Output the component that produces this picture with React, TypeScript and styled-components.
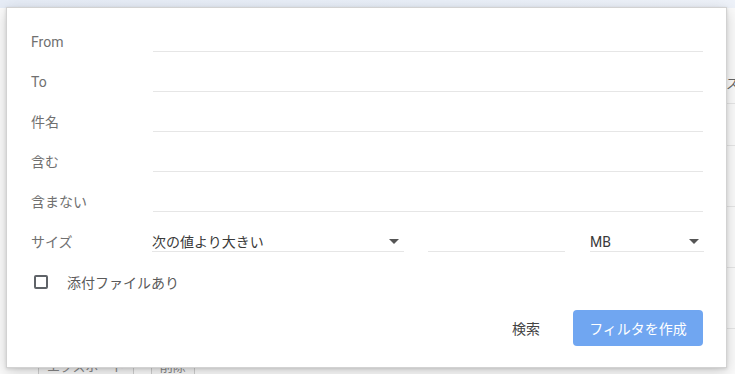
import React from "react";
import styled, { createGlobalStyle } from "styled-components";

const Global = createGlobalStyle`
  html, body { margin: 0; padding: 0; background: #ffffff; }
  body { font-family: Roboto, "Noto Sans CJK JP", "Noto Sans", sans-serif; }
  * { box-sizing: border-box; }
`;

const Page = styled.div`
  position: relative;
  width: 735px;
  height: 374px;
  overflow: hidden;
  background: #ffffff;
  display: flex;
  flex-direction: column;
`;

const TopBand = styled.div`
  height: 8px;
  flex: none;
  background: linear-gradient(90deg, #e6ecf6 0%, #e9eff8 60%, #eef2f9 100%);
`;

const BackBody = styled.div`
  flex: 1;
  display: flex;
  flex-direction: column;
  padding-left: 38px;
  background: #fbfbfb;
`;

const Spacer = styled.div`
  height: 54px;
  flex: none;
`;

const TableRow = styled.div<{ $h: number }>`
  height: ${(p) => p.$h}px;
  flex: none;
  display: grid;
  grid-template-columns: 688px 1fr;
  align-items: center;
  border-bottom: 1px solid #e6e6e6;
  font-size: 13px;
  color: #666;
  white-space: nowrap;
`;

const Cell = styled.span`
  overflow: hidden;
`;

const BackActions = styled.div`
  display: flex;
  gap: 17px;
  margin-top: 25px;
`;

const BackButton = styled.div`
  height: 26px;
  padding: 0 8px;
  border: 1px solid #cfcfcf;
  border-radius: 2px;
  font-size: 13px;
  line-height: 24px;
  color: #888;
  background: #f7f7f7;
  white-space: nowrap;
`;

const Dialog = styled.div`
  position: absolute;
  top: 7px;
  left: 6px;
  width: 721px;
  height: 361px;
  background: #ffffff;
  border: 1px solid #d2d2d2;
  box-shadow: 0 4px 14px rgba(0, 0, 0, 0.18), 0 1px 3px rgba(0, 0, 0, 0.12);
  padding: 4px 23px 0 24px;
  display: flex;
  flex-direction: column;
`;

const Row = styled.div`
  height: 40px;
  display: grid;
  grid-template-columns: 121px 1fr;
  align-items: end;
`;

const Label = styled.div`
  height: 20px;
  line-height: 20px;
  font-size: 14px;
  color: #707070;
  white-space: nowrap;
`;

const Field = styled.div`
  height: 20px;
  margin-left: 1px;
  border-bottom: 1px solid #e6e6e6;
`;

const SizeControls = styled.div`
  display: flex;
  align-items: end;
`;

const Select = styled.div<{ $w: number; $ml?: number }>`
  width: ${(p) => p.$w}px;
  margin-left: ${(p) => p.$ml ?? 0}px;
  height: 20px;
  flex: none;
  display: flex;
  align-items: center;
  justify-content: space-between;
  padding-right: 5px;
  border-bottom: 1px solid #e6e6e6;
  font-size: 14px;
  color: #3a3a3a;
  line-height: 20px;
`;

const SizeInput = styled.div<{ $w: number; $ml: number }>`
  width: ${(p) => p.$w}px;
  margin-left: ${(p) => p.$ml}px;
  height: 20px;
  flex: none;
  border-bottom: 1px solid #e6e6e6;
`;

const Arrow = () => (
  <svg width="10" height="5" viewBox="0 0 10 5" aria-hidden="true">
    <path d="M0 0 L10 0 L5 5 Z" fill="#555" />
  </svg>
);

const CheckRow = styled.label`
  margin-top: 10px;
  height: 40px;
  display: flex;
  align-items: center;
  gap: 19px;
  padding-left: 3px;
  font-size: 14px;
  color: #5a5a5a;
`;

const CheckBox = styled.span`
  width: 14px;
  height: 14px;
  border: 2px solid #5f6368;
  border-radius: 2px;
  flex: none;
`;

const Footer = styled.div`
  margin-top: 8px;
  display: flex;
  justify-content: flex-end;
  align-items: center;
  gap: 17px;
`;

const TextButton = styled.button`
  height: 36px;
  padding: 0 16px;
  border: none;
  background: transparent;
  font-family: inherit;
  font-size: 14px;
  color: #444;
`;

const PrimaryButton = styled.button`
  height: 36px;
  width: 130px;
  padding: 0 16px;
  border: none;
  border-radius: 4px;
  background: #70a6f1;
  color: #ffffff;
  font-family: inherit;
  font-size: 14px;
`;

const textRows = [
  { label: "From" },
  { label: "To" },
  { label: "件名" },
  { label: "含む" },
  { label: "含まない" },
];

export default function App() {
  return (
    <>
      <Global />
      <Page>
        <TopBand />
        <BackBody>
          <Spacer />
          <TableRow $h={42}>
            <Cell />
            <Cell>スター付き</Cell>
          </TableRow>
          <TableRow $h={42}>
            <Cell />
            <Cell />
          </TableRow>
          <TableRow $h={61}>
            <Cell />
            <Cell />
          </TableRow>
          <TableRow $h={61}>
            <Cell />
            <Cell />
          </TableRow>
          <TableRow $h={61}>
            <Cell />
            <Cell />
          </TableRow>
          <BackActions>
            <BackButton>エクスポート</BackButton>
            <BackButton>削除</BackButton>
          </BackActions>
        </BackBody>

        <Dialog>
          {textRows.map((r) => (
            <Row key={r.label}>
              <Label>{r.label}</Label>
              <Field />
            </Row>
          ))}
          <Row>
            <Label>サイズ</Label>
            <SizeControls>
              <Select $w={252}>
                <span>次の値より大きい</span>
                <Arrow />
              </Select>
              <SizeInput $w={137} $ml={24} />
              <Select $w={114} $ml={25}>
                <span>MB</span>
                <Arrow />
              </Select>
            </SizeControls>
          </Row>
          <CheckRow>
            <CheckBox />
            <span>添付ファイルあり</span>
          </CheckRow>
          <Footer>
            <TextButton>検索</TextButton>
            <PrimaryButton>フィルタを作成</PrimaryButton>
          </Footer>
        </Dialog>
      </Page>
    </>
  );
}
